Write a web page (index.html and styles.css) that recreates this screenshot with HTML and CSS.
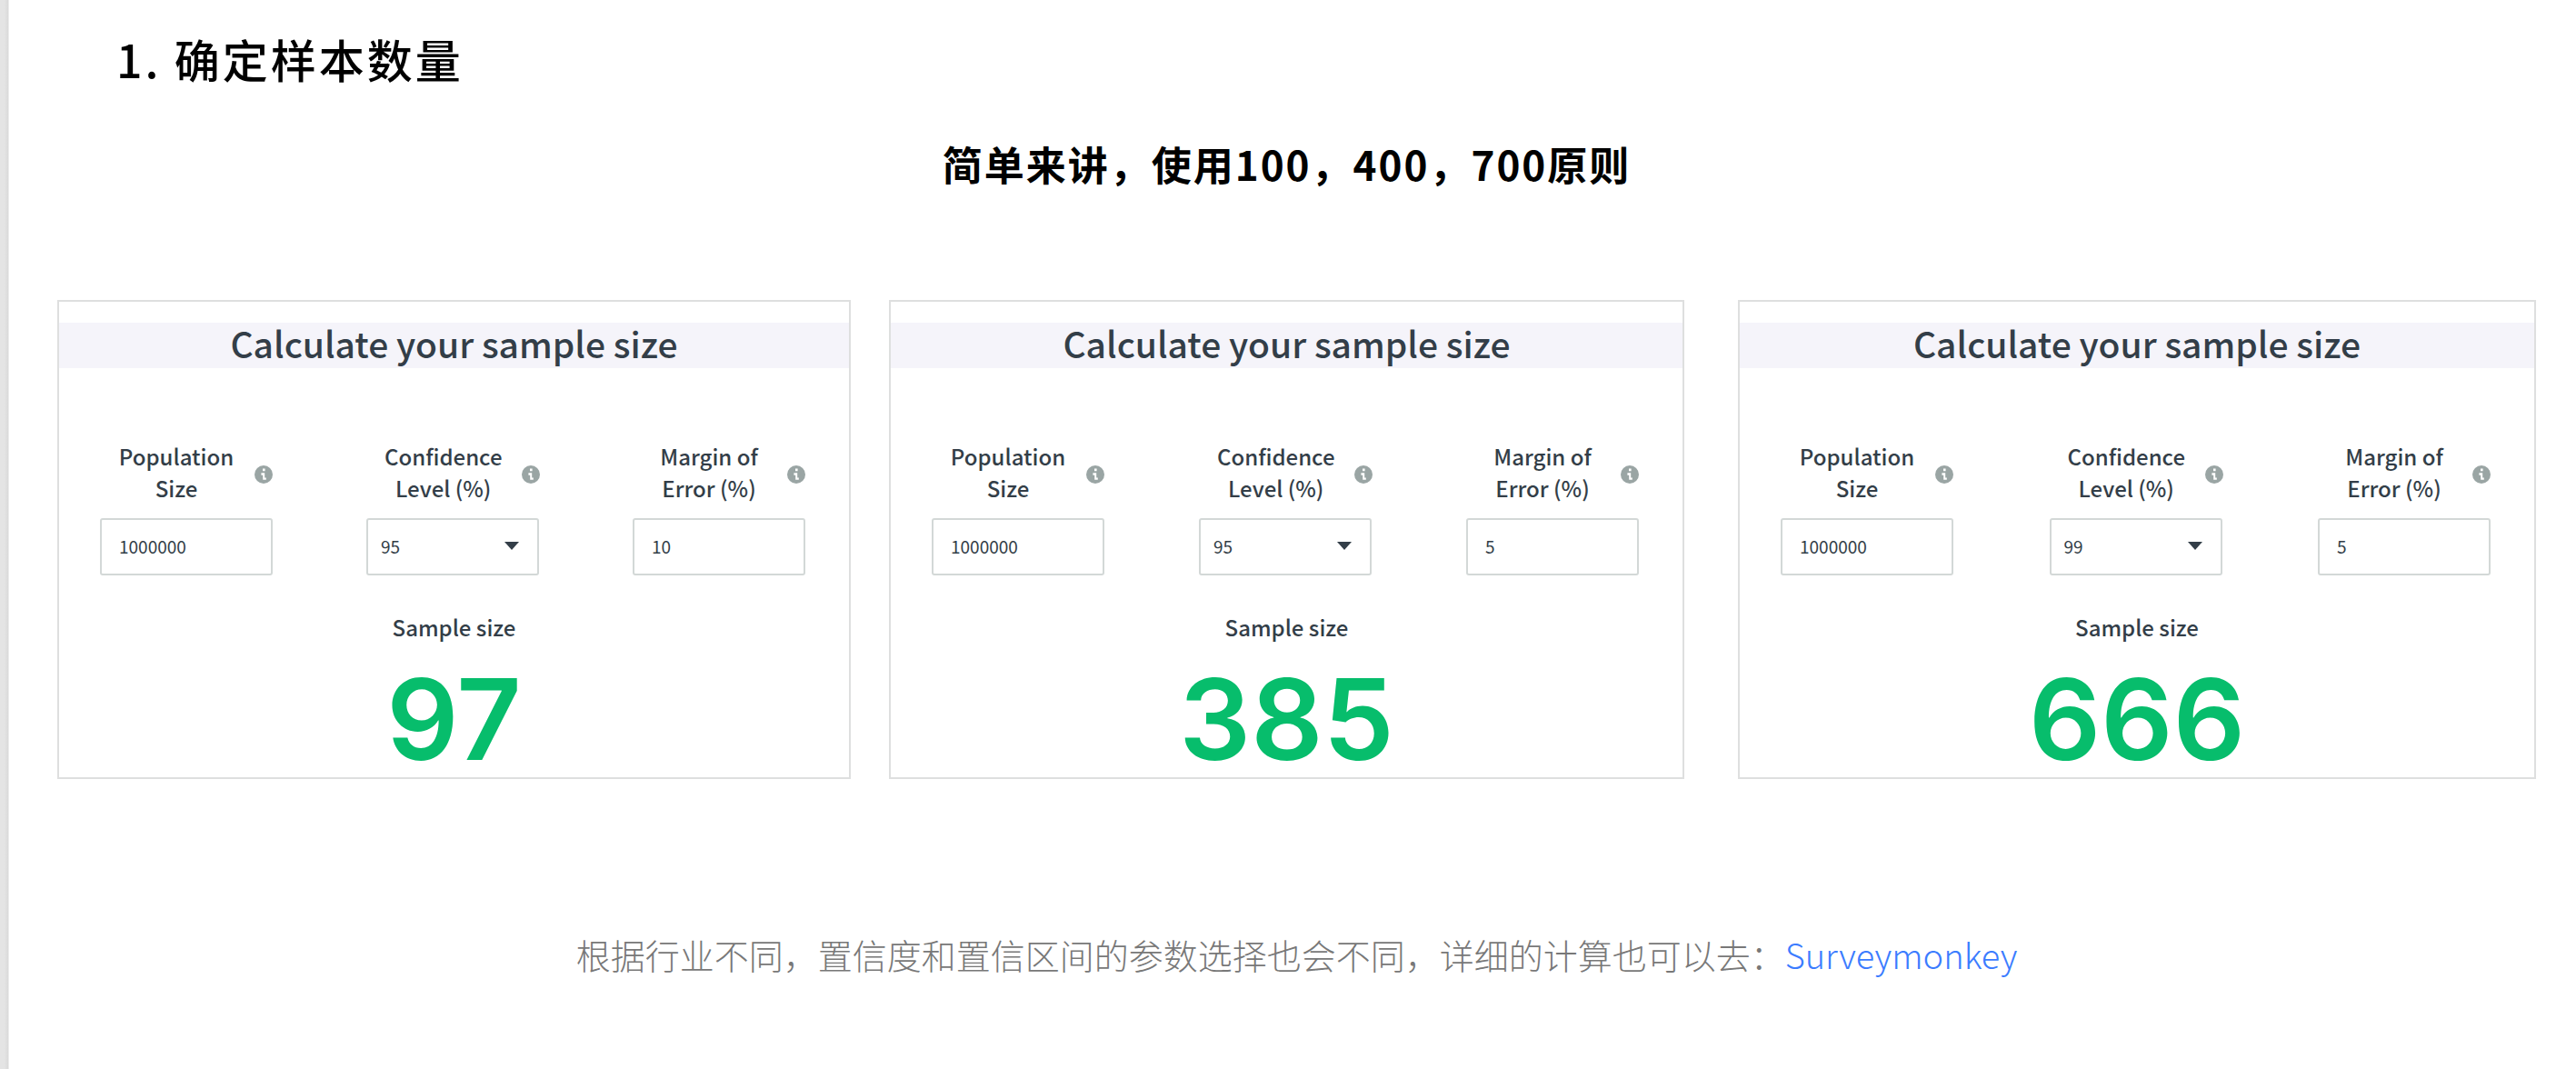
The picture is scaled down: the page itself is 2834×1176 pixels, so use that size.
FILE: index.html
```html
<!DOCTYPE html>
<html lang="zh-CN">
<head>
<meta charset="utf-8">
<meta name="viewport" content="width=device-width, initial-scale=1">
<title>确定样本数量</title>
<link rel="stylesheet" href="styles.css">
</head>
<body>
<main class="page">
  <h1 class="title">1. 确定样本数量</h1>
  <h2 class="subtitle">简单来讲，使用100，400，700原则</h2>

  <div class="cards">
    <section class="card">
      <h3 class="card-title">Calculate your sample size</h3>
      <div class="fields">
        <div class="field">
          <div class="field-head">
            <label for="pop-a">Population Size</label>
            <svg class="info" viewBox="0 0 20 20" aria-hidden="true"><circle cx="10" cy="10" r="10"/><path d="M9 3.6h2.6v2.6H9zM7.4 8.2h3.8v5.2h1.6v2.4H9.2v-5H7.4z"/></svg>
          </div>
          <input class="control" id="pop-a" type="text" value="1000000">
        </div>
        <div class="field">
          <div class="field-head">
            <label for="conf-a">Confidence Level (%)</label>
            <svg class="info" viewBox="0 0 20 20" aria-hidden="true"><circle cx="10" cy="10" r="10"/><path d="M9 3.6h2.6v2.6H9zM7.4 8.2h3.8v5.2h1.6v2.4H9.2v-5H7.4z"/></svg>
          </div>
          <div class="select-wrap">
            <select class="control" id="conf-a"><option>95</option></select>
            <svg class="arrow" viewBox="0 0 16 9" aria-hidden="true"><path d="M0 0h16L8 9z"/></svg>
          </div>
        </div>
        <div class="field">
          <div class="field-head">
            <label for="err-a">Margin of Error (%)</label>
            <svg class="info" viewBox="0 0 20 20" aria-hidden="true"><circle cx="10" cy="10" r="10"/><path d="M9 3.6h2.6v2.6H9zM7.4 8.2h3.8v5.2h1.6v2.4H9.2v-5H7.4z"/></svg>
          </div>
          <input class="control" id="err-a" type="text" value="10">
        </div>
      </div>
      <p class="result-label">Sample size</p>
      <p class="result">97</p>
    </section>

    <section class="card">
      <h3 class="card-title">Calculate your sample size</h3>
      <div class="fields">
        <div class="field">
          <div class="field-head">
            <label for="pop-b">Population Size</label>
            <svg class="info" viewBox="0 0 20 20" aria-hidden="true"><circle cx="10" cy="10" r="10"/><path d="M9 3.6h2.6v2.6H9zM7.4 8.2h3.8v5.2h1.6v2.4H9.2v-5H7.4z"/></svg>
          </div>
          <input class="control" id="pop-b" type="text" value="1000000">
        </div>
        <div class="field">
          <div class="field-head">
            <label for="conf-b">Confidence Level (%)</label>
            <svg class="info" viewBox="0 0 20 20" aria-hidden="true"><circle cx="10" cy="10" r="10"/><path d="M9 3.6h2.6v2.6H9zM7.4 8.2h3.8v5.2h1.6v2.4H9.2v-5H7.4z"/></svg>
          </div>
          <div class="select-wrap">
            <select class="control" id="conf-b"><option>95</option></select>
            <svg class="arrow" viewBox="0 0 16 9" aria-hidden="true"><path d="M0 0h16L8 9z"/></svg>
          </div>
        </div>
        <div class="field">
          <div class="field-head">
            <label for="err-b">Margin of Error (%)</label>
            <svg class="info" viewBox="0 0 20 20" aria-hidden="true"><circle cx="10" cy="10" r="10"/><path d="M9 3.6h2.6v2.6H9zM7.4 8.2h3.8v5.2h1.6v2.4H9.2v-5H7.4z"/></svg>
          </div>
          <input class="control" id="err-b" type="text" value="5">
        </div>
      </div>
      <p class="result-label">Sample size</p>
      <p class="result">385</p>
    </section>

    <section class="card card-last">
      <h3 class="card-title">Calculate your sample size</h3>
      <div class="fields">
        <div class="field">
          <div class="field-head">
            <label for="pop-c">Population Size</label>
            <svg class="info" viewBox="0 0 20 20" aria-hidden="true"><circle cx="10" cy="10" r="10"/><path d="M9 3.6h2.6v2.6H9zM7.4 8.2h3.8v5.2h1.6v2.4H9.2v-5H7.4z"/></svg>
          </div>
          <input class="control" id="pop-c" type="text" value="1000000">
        </div>
        <div class="field">
          <div class="field-head">
            <label for="conf-c">Confidence Level (%)</label>
            <svg class="info" viewBox="0 0 20 20" aria-hidden="true"><circle cx="10" cy="10" r="10"/><path d="M9 3.6h2.6v2.6H9zM7.4 8.2h3.8v5.2h1.6v2.4H9.2v-5H7.4z"/></svg>
          </div>
          <div class="select-wrap">
            <select class="control" id="conf-c"><option>99</option></select>
            <svg class="arrow" viewBox="0 0 16 9" aria-hidden="true"><path d="M0 0h16L8 9z"/></svg>
          </div>
        </div>
        <div class="field">
          <div class="field-head">
            <label for="err-c">Margin of Error (%)</label>
            <svg class="info" viewBox="0 0 20 20" aria-hidden="true"><circle cx="10" cy="10" r="10"/><path d="M9 3.6h2.6v2.6H9zM7.4 8.2h3.8v5.2h1.6v2.4H9.2v-5H7.4z"/></svg>
          </div>
          <input class="control" id="err-c" type="text" value="5">
        </div>
      </div>
      <p class="result-label">Sample size</p>
      <p class="result">666</p>
    </section>
  </div>

  <p class="note">根据行业不同，置信度和置信区间的参数选择也会不同，详细的计算也可以去：<a href="https://www.surveymonkey.com/mp/sample-size-calculator/">Surveymonkey</a></p>
</main>
</body>
</html>
```
FILE: styles.css
```css
* {
  box-sizing: border-box;
}

body {
  margin: 0;
  background: #fff;
  color: #000;
  font-family: "Noto Sans CJK SC", sans-serif;
}

h1, h2, h3, p {
  margin: 0;
}

.page {
  min-height: 100vh;
  padding: 29px 44px 32px 63px;
  background: linear-gradient(to right, #e4e4e4 5px, #d9d9d9 9px, #fff 10px) no-repeat left / 10px 100%;
}

.title {
  padding-left: 65px;
  font-size: 50px;
  font-weight: 500;
  line-height: 70px;
  letter-spacing: 3px;
}

.subtitle {
  margin-top: 46px;
  padding-right: 22px;
  font-size: 44px;
  font-weight: 700;
  line-height: 70px;
  letter-spacing: 2px;
  text-align: center;
}

.cards {
  display: grid;
  grid-template-columns: 873fr 875fr 895fr;
  gap: 42px;
  margin-top: 115px;
}

.card {
  min-width: 0;
  padding-top: 23px;
  border: 2px solid #dedfdf;
  color: #333e48;
}

.card-last {
  margin-left: 17px;
}

.card-title {
  padding-bottom: 5px;
  background: #f5f4fa;
  font-size: 39px;
  font-weight: 500;
  line-height: 45px;
  text-align: center;
}

.fields {
  display: flex;
  justify-content: space-between;
  padding: 79px 48px 0 45px;
}

.field {
  width: 190px;
}

.field-head {
  display: flex;
  align-items: center;
}

.field-head label {
  flex: 1;
  padding: 0 22px 0 20px;
  font-size: 24px;
  font-weight: 500;
  line-height: 35px;
  text-align: center;
}

.info {
  flex: none;
  width: 20px;
  height: 20px;
  margin-top: 5px;
}

.info circle { fill: #9aa5a4; }
.info path { fill: #fff; }

.control {
  display: block;
  width: 100%;
  height: 63px;
  margin-top: 16px;
  padding: 0 19px 2px;
  border: 2px solid #d3d8d7;
  border-radius: 3px;
  background: #fff;
  color: #333e48;
  font-family: inherit;
  font-size: 19px;
}

.select-wrap {
  position: relative;
}

select.control {
  appearance: none;
  padding: 0 14px 2px;
}

.arrow {
  position: absolute;
  top: 26px;
  right: 22px;
  width: 16px;
  height: 9px;
  fill: #333e48;
  pointer-events: none;
}

.result-label {
  margin-top: 39px;
  font-size: 24px;
  font-weight: 500;
  line-height: 35px;
  text-align: center;
}

.result {
  margin-top: 20px;
  color: #07bd6c;
  font-family: Inter, sans-serif;
  font-size: 124px;
  font-weight: 600;
  line-height: 128px;
  text-align: center;
}

.note {
  margin-top: 158px;
  color: #787878;
  font-size: 38px;
  font-weight: 300;
  line-height: 70px;
  text-align: center;
}

.note a {
  color: #3b7cff;
  text-decoration: none;
}
```
